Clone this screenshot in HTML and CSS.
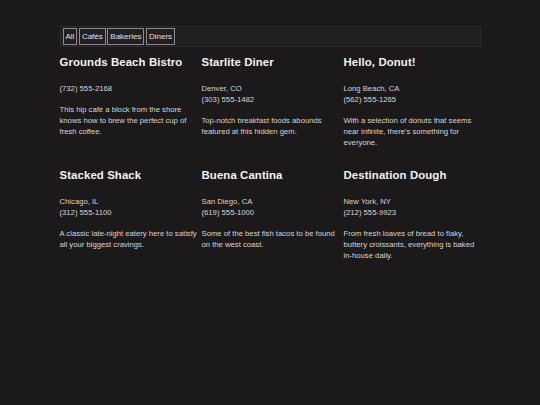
FILE: index.html
```html
<!DOCTYPE html>
<html lang="en">
<head>
<meta charset="utf-8">
<title>Restaurants</title>
<link rel="stylesheet" href="styles.css">
</head>
<body>
<div class="page">
  <nav class="filters">
    <button class="filter">All</button>
    <button class="filter">Cafés</button>
    <button class="filter">Bakeries</button>
    <button class="filter">Diners</button>
  </nav>
  <main class="grid">
    <section class="card">
      <h2 class="name">Grounds Beach Bistro</h2>
      <p class="info">(732) 555-2168</p>
      <p class="desc">This hip café a block from the shore knows how to brew the perfect cup of fresh coffee.</p>
    </section>
    <section class="card">
      <h2 class="name">Starlite Diner</h2>
      <p class="info">Denver, CO<br>(303) 555-1482</p>
      <p class="desc">Top-notch breakfast foods abounds featured at this hidden gem.</p>
    </section>
    <section class="card">
      <h2 class="name">Hello, Donut!</h2>
      <p class="info">Long Beach, CA<br>(562) 555-1265</p>
      <p class="desc">With a selection of donuts that seems near infinite, there's something for everyone.</p>
    </section>
    <section class="card">
      <h2 class="name">Stacked Shack</h2>
      <p class="info">Chicago, IL<br>(312) 555-1100</p>
      <p class="desc">A classic late-night eatery here to satisfy all your biggest cravings.</p>
    </section>
    <section class="card">
      <h2 class="name">Buena Cantina</h2>
      <p class="info">San Diego, CA<br>(619) 555-1000</p>
      <p class="desc">Some of the best fish tacos to be found on the west coast.</p>
    </section>
    <section class="card">
      <h2 class="name">Destination Dough</h2>
      <p class="info">New York, NY<br>(212) 555-9923</p>
      <p class="desc">From fresh loaves of bread to flaky, buttery croissants, everything is baked in-house daily.</p>
    </section>
  </main>
</div>
</body>
</html>
```

FILE: styles.css
```css
html, body {
  margin: 0;
  padding: 0;
  background: #1b191a;
}
body {
  font-family: "Liberation Sans", Arial, sans-serif;
  color: #d6d6d6;
  font-size: 7.7px;
}
.page {
  width: 421px;
  margin: 0 auto;
  padding-top: 26px;
}
.filters {
  display: flex;
  gap: 1.5px;
  padding: 1px 2px;
  background: #211f21;
  border: 1px solid #2a282a;
}
.filter {
  font-family: "Liberation Sans", Arial, sans-serif;
  font-size: 8px;
  line-height: 9px;
  color: #e0e0e0;
  background: transparent;
  border: 1px solid #8a8a8a;
  padding: 3px 2px;
  margin: 0;
}
.grid {
  display: grid;
  grid-template-columns: repeat(3, 138px);
  column-gap: 4px;
  row-gap: 1.5px;
}
.name {
  font-size: 11.4px;
  line-height: 15px;
  font-weight: bold;
  color: #f2f2f2;
  margin: 8px 0 13px;
  letter-spacing: 0.1px;
}
.info, .desc {
  margin: 0 0 10px;
  line-height: 11px;
}
```
